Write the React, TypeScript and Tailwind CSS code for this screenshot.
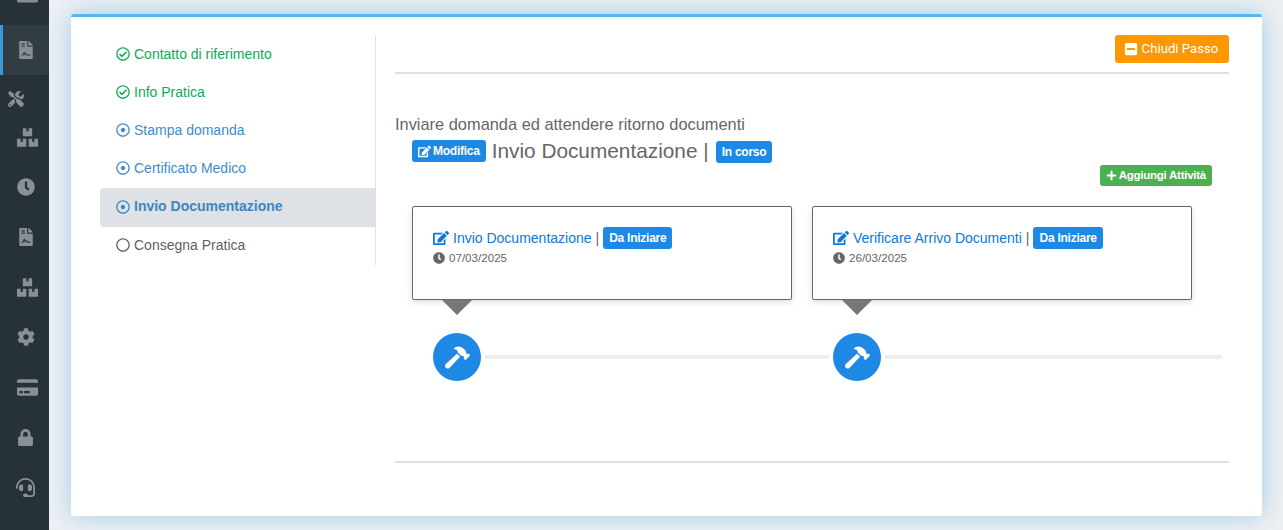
import type { ReactNode } from 'react';
import {
  FaBoxes,
  FaClock,
  FaCog,
  FaCreditCard,
  FaEdit,
  FaFileContract,
  FaHammer,
  FaHdd,
  FaHeadset,
  FaLock,
  FaMinusSquare,
  FaPlus,
  FaRegCheckCircle,
  FaRegCircle,
  FaRegDotCircle,
  FaTools,
} from 'react-icons/fa';

const steps = [
  { label: 'Contatto di riferimento', state: 'done' },
  { label: 'Info Pratica', state: 'done' },
  { label: 'Stampa domanda', state: 'open' },
  { label: 'Certificato Medico', state: 'open' },
  { label: 'Invio Documentazione', state: 'active' },
  { label: 'Consegna Pratica', state: 'todo' },
];

const activities = [
  { title: 'Invio Documentazione', date: '07/03/2025' },
  { title: 'Verificare Arrivo Documenti', date: '26/03/2025' },
];

const NavIcon = ({ children }: { children: ReactNode }) => (
  <div className="flex h-[50px] items-center justify-center pl-[2px] text-[21px] text-[#8a8f95]">{children}</div>
);

const WideIcon = ({ children }: { children: ReactNode }) => (
  <div className="flex h-[50px] items-center justify-center pl-[5px] text-[21px] text-[#8a8f95]">{children}</div>
);

const Sidebar = () => (
  <aside className="h-[530px] w-[49px] shrink-0 overflow-hidden bg-[#263238]">
    <div className="-mt-[25px]">
      <div className="flex h-[50px] items-center justify-center pb-[10px] pl-[5px] text-[21px] text-[#8a8f95]">
        <FaHdd />
      </div>
      <div className="flex h-[50px] items-center justify-center border-l-[3px] border-[#3c97d3] bg-[#323c43] text-[18px] text-[#8a8f95]">
        <FaFileContract />
      </div>
      <div className="flex h-[37px] items-end pb-[5px] pl-[8px] text-[16px] text-[#8a8f95]">
        <FaTools />
      </div>
      <WideIcon><FaBoxes /></WideIcon>
      <NavIcon><FaClock className="text-[18px]" /></NavIcon>
      <NavIcon><FaFileContract className="text-[18px]" /></NavIcon>
      <WideIcon><FaBoxes /></WideIcon>
      <NavIcon><FaCog className="text-[18px]" /></NavIcon>
      <WideIcon><FaCreditCard /></WideIcon>
      <NavIcon><FaLock className="text-[17px]" /></NavIcon>
      <NavIcon><FaHeadset className="text-[19px]" /></NavIcon>
    </div>
  </aside>
);

const StepIcon = ({ state }: { state: string }) => {
  if (state === 'done') return <FaRegCheckCircle className="text-[14px]" />;
  if (state === 'todo') return <FaRegCircle className="text-[14px]" />;
  return <FaRegDotCircle className="text-[14px]" />;
};

const StepList = () => (
  <div className="h-[229px] w-[276px] shrink-0 border-r border-[#dee2e6]">
    {steps.map((step) => (
      <div
        key={step.label}
        className={`flex items-center gap-[4px] pb-[2px] pl-[16px] text-[14px] ${
          step.state === 'done'
            ? 'h-[38px] text-[#0fa958]'
            : step.state === 'todo'
              ? 'h-[38px] text-[#5f5f5f]'
              : step.state === 'active'
                ? 'h-[39px] rounded-l bg-[#dee1e6] font-bold text-[#3c87bd]'
                : 'h-[38px] text-[#428bca]'
        }`}
      >
        <StepIcon state={step.state} />
        {step.label}
      </div>
    ))}
  </div>
);

const Badge = ({ children }: { children: ReactNode }) => (
  <span className="inline-flex h-[22px] items-center rounded-[3px] bg-[#1e88e5] px-[6px] text-[12px] font-bold tracking-[-0.25px] text-white">
    {children}
  </span>
);

const ActivityCard = ({ title, date }: { title: string; date: string }) => (
  <div className="w-[380px]">
    <div className="h-[94px] rounded-[2px] border border-[#666] bg-white pl-[20px] pt-[20px] shadow-[0_2px_6px_rgba(0,0,0,0.15)]">
      <div className="flex h-[22px] items-center text-[14px] text-[#0b78dc]">
        <FaEdit className="mr-[4px] text-[16px]" />
        {title}
        <span className="ml-[4px] mr-[4px] text-[#666]">|</span>
        <Badge>Da Iniziare</Badge>
      </div>
      <div className="flex items-center gap-[4px] text-[11.6px] text-[#666]">
        <FaClock className="text-[12px]" />
        {date}
      </div>
    </div>
    <div className="ml-[30px] h-0 w-0 border-x-[15px] border-t-[15px] border-x-transparent border-t-[#777]" />
  </div>
);

const HammerDot = () => (
  <div className="flex h-12 w-12 shrink-0 items-center justify-center rounded-full bg-[#1e88e5] text-[25px] text-white">
    <FaHammer />
  </div>
);

export default function App() {
  return (
    <div className="flex h-[530px] w-[1283px] overflow-hidden bg-[#eef0f3] font-['Liberation_Sans',Arial,sans-serif]">
      <Sidebar />
      <main className="ml-[22px] mt-[14px] flex h-[502px] w-[1191px] rounded-[3px] border-t-[3px] border-[#56b7ee] bg-white pl-[29px] pr-[33px] pt-[19px] shadow-[0_0_24px_rgba(90,170,220,0.5)]">
        <StepList />
        <section className="ml-[19px] flex-1 text-[#666]">
          <div className="flex h-[38px] justify-end border-b-2 border-[#dee2e6]">
            <button className="-mt-[1px] flex h-[28px] w-[114px] items-center justify-center gap-[4px] rounded-[3px] bg-[#ff9800] pr-[2px] font-['Roboto',sans-serif] text-[13.2px] text-white">
              <FaMinusSquare className="text-[14px]" />
              Chiudi Passo
            </button>
          </div>
          <p className="mt-[40px] text-[16.4px] leading-[20px]">Inviare domanda ed attendere ritorno documenti</p>
          <div className="ml-[17px] mt-[5px] flex items-center">
            <Badge>
              <FaEdit className="mr-[2px] text-[13px]" />
              Modifica
            </Badge>
            <span className="ml-[6px] text-[20.8px] leading-[24px]">Invio Documentazione |</span>
            <span className="ml-[7px]">
              <Badge>In corso</Badge>
            </span>
          </div>
          <div className="mr-[17px] mt-[2px] flex justify-end">
            <span className="flex h-[21px] items-center gap-[2px] rounded-[3px] bg-[#4caf50] px-[6px] text-[11.5px] font-bold tracking-[-0.25px] text-white">
              <FaPlus className="text-[11px]" />
              Aggiungi Attività
            </span>
          </div>
          <div className="ml-[17px] mt-[20px] flex gap-[20px]">
            {activities.map((activity) => (
              <ActivityCard key={activity.title} {...activity} />
            ))}
          </div>
          <div className="ml-[38px] mr-[7px] mt-[18px] flex items-center">
            <HammerDot />
            <div className="mx-[4px] h-[4px] flex-1 bg-[#eeeeee]" />
            <HammerDot />
            <div className="ml-[4px] h-[4px] w-[337px] bg-[#eeeeee]" />
          </div>
          <div className="mt-[80px] border-t-2 border-[#dee2e6]" />
        </section>
      </main>
    </div>
  );
}
